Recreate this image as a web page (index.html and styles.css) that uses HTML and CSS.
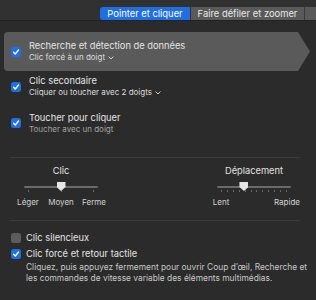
FILE: index.html
```html
<!DOCTYPE html>
<html lang="fr">
<head>
<meta charset="utf-8">
<link rel="stylesheet" href="styles.css">
</head>
<body>
<div class="window">
  <div class="toolbar">
    <div class="tabs">
      <div class="tab active">Pointer et cliquer</div>
      <div class="tab second">Faire défiler et zoomer</div>
      <div class="tab third"></div>
    </div>
  </div>

  <div class="options">
    <div class="row selected">
      <span class="cb on"><svg viewBox="0 0 10 10"><path d="M2.6 5.2 L4.3 7 L7.5 3" /></svg></span>
      <div class="text">
        <div class="title">Recherche et détection de données</div>
        <div class="sub pop">Clic forcé à un doigt<svg class="chev" viewBox="0 0 6 4"><path d="M0.8 0.8 L3 3 L5.2 0.8"/></svg></div>
      </div>
    </div>
    <div class="row second-row">
      <span class="cb on"><svg viewBox="0 0 10 10"><path d="M2.6 5.2 L4.3 7 L7.5 3" /></svg></span>
      <div class="text">
        <div class="title">Clic secondaire</div>
        <div class="sub pop">Cliquer ou toucher avec 2 doigts<svg class="chev" viewBox="0 0 6 4"><path d="M0.8 0.8 L3 3 L5.2 0.8"/></svg></div>
      </div>
    </div>
    <div class="row third-row">
      <span class="cb on"><svg viewBox="0 0 10 10"><path d="M2.6 5.2 L4.3 7 L7.5 3" /></svg></span>
      <div class="text">
        <div class="title">Toucher pour cliquer</div>
        <div class="sub dim">Toucher avec un doigt</div>
      </div>
    </div>
  </div>

  <div class="sep"></div>

  <div class="sliders">
    <div class="slider">
      <div class="s-title">Clic</div>
      <div class="track-wrap">
        <div class="track"></div>
        <div class="ticks">
          <i></i><i></i><i></i>
        </div>
        <div class="thumb" style="left: 50%"></div>
      </div>
      <div class="s-labels">
        <span><b>Léger</b></span><span><b>Moyen</b></span><span><b>Ferme</b></span>
      </div>
    </div>
    <div class="slider">
      <div class="s-title">Déplacement</div>
      <div class="track-wrap">
        <div class="track"></div>
        <div class="ticks">
          <i></i><i></i><i></i><i></i><i></i><i></i><i></i><i></i><i></i><i></i><i></i><i></i>
        </div>
        <div class="thumb" style="left: 36.4%"></div>
      </div>
      <div class="s-labels">
        <span><b>Lent</b></span><span><b>Rapide</b></span>
      </div>
    </div>
  </div>

  <div class="sep sep2"></div>

  <div class="checks">
    <div class="check">
      <span class="cb off"></span>
      <div class="text">
        <div class="title">Clic silencieux</div>
      </div>
    </div>
    <div class="check">
      <span class="cb on"><svg viewBox="0 0 10 10"><path d="M2.6 5.2 L4.3 7 L7.5 3" /></svg></span>
      <div class="text">
        <div class="title">Clic forcé et retour tactile</div>
        <div class="desc">Cliquez, puis appuyez fermement pour ouvrir Coup d’œil, Recherche et<br>les commandes de vitesse variable des éléments multimédias.</div>
      </div>
    </div>
  </div>
</div>
</body>
</html>
```

FILE: styles.css
```css
* { box-sizing: border-box; }
html, body {
  margin: 0;
  padding: 0;
  background: #2b2b2b;
}
body {
  width: 316px;
  height: 300px;
  overflow: hidden;
  font-family: Inter, "Noto Sans", "Liberation Sans", sans-serif;
  color: #e2e2e2;
}
.window {
  width: 316px;
  height: 300px;
  overflow: hidden;
}

/* toolbar + tabs */
.toolbar {
  height: 21px;
  background: #313131;
  border-bottom: 1px solid #232323;
  display: flex;
  align-items: flex-end;
  padding-left: 100px;
}
.tabs {
  display: flex;
  height: 13px;
  white-space: nowrap;
}
.tab {
  height: 13px;
  font-size: 9.4px;
  line-height: 13px;
  text-align: center;
  color: #e8e8e8;
  background: #5a5a5a;
}
.tab.active {
  width: 90px;
  background: #1f6fe2;
  color: #ffffff;
  border-radius: 3px 0 0 3px;
}
.tab.second {
  width: 114px;
  margin-left: 1px;
  border-right: 1px solid #3a3a3a;
}
.tab.third {
  width: 12px;
}

/* options list */
.options {
  padding-top: 11px;
}
.row {
  display: flex;
  align-items: center;
  margin-left: 4px;
  padding-left: 7px;
  gap: 8px;
}
.row.selected {
  width: 306px;
  height: 39px;
  background: #5a5a5a;
  border-radius: 4px 0 0 4px;
  clip-path: polygon(0 0, 294px 0, 306px 50%, 294px 100%, 0 100%);
}
.row.second-row { height: 31px; }
.row.third-row { height: 42px; }

.cb {
  flex: none;
  width: 10px;
  height: 10px;
  border-radius: 2.5px;
  display: inline-flex;
}
.cb.on { background: #2170e0; }
.cb.off { background: #5c5c5c; }
.cb svg {
  width: 10px;
  height: 10px;
  fill: none;
  stroke: #ffffff;
  stroke-width: 1.3;
  stroke-linecap: round;
  stroke-linejoin: round;
}

.text { display: flex; flex-direction: column; }
.title {
  font-size: 9.3px;
  line-height: 12px;
  color: #e4e4e4;
}
.sub {
  font-size: 8px;
  line-height: 11px;
  display: flex;
  align-items: center;
  gap: 3px;
}
.sub.pop { color: #dcdcdc; }
.sub.dim { color: #a3a3a3; }
.chev {
  width: 6px;
  height: 4px;
  fill: none;
  stroke: #d0d0d0;
  stroke-width: 1;
  stroke-linecap: round;
  stroke-linejoin: round;
}

.sep {
  height: 1px;
  background: #3c3c3c;
  margin: 13px 16px 0 10px;
}
.sep2 { margin-top: 13px; }

/* sliders */
.sliders {
  display: flex;
  justify-content: space-between;
  padding: 0 25px 0 24px;
}
.slider {
  width: 74px;
}
.s-title {
  margin-top: 7px;
  font-size: 9.3px;
  line-height: 12px;
  text-align: center;
  color: #e2e2e2;
}
.track-wrap {
  position: relative;
  height: 10px;
  margin-top: 5px;
  padding-top: 4px;
}
.track {
  height: 2px;
  background: #6a6a6a;
  border-radius: 1px;
}
.ticks {
  display: flex;
  justify-content: space-between;
  margin: 2px 4px 0;
}
.ticks i {
  width: 1px;
  height: 2px;
  background: #6a6a6a;
}
.thumb {
  position: absolute;
  top: 0;
  width: 9px;
  height: 9px;
  margin-left: -4.5px;
  background: #e6e6e6;
  clip-path: polygon(0 0, 100% 0, 100% 55%, 50% 100%, 0 55%);
}
.s-labels {
  display: flex;
  justify-content: space-between;
  margin: 5px 4px 0;
  height: 10px;
}
.s-labels span {
  width: 0;
  display: flex;
  justify-content: center;
}
.s-labels b {
  font-weight: normal;
  font-size: 8px;
  line-height: 10px;
  white-space: nowrap;
  color: #d2d2d2;
}

/* checks */
.checks {
  padding-top: 9px;
  padding-left: 11px;
}
.check {
  display: flex;
  align-items: flex-start;
  gap: 5px;
  min-height: 16px;
  padding-top: 2px;
}
.check .cb { margin-top: 1px; }
.desc {
  margin-top: 1.5px;
  font-size: 8.4px;
  line-height: 11px;
  color: #c8c8c8;
  white-space: nowrap;
}
```
